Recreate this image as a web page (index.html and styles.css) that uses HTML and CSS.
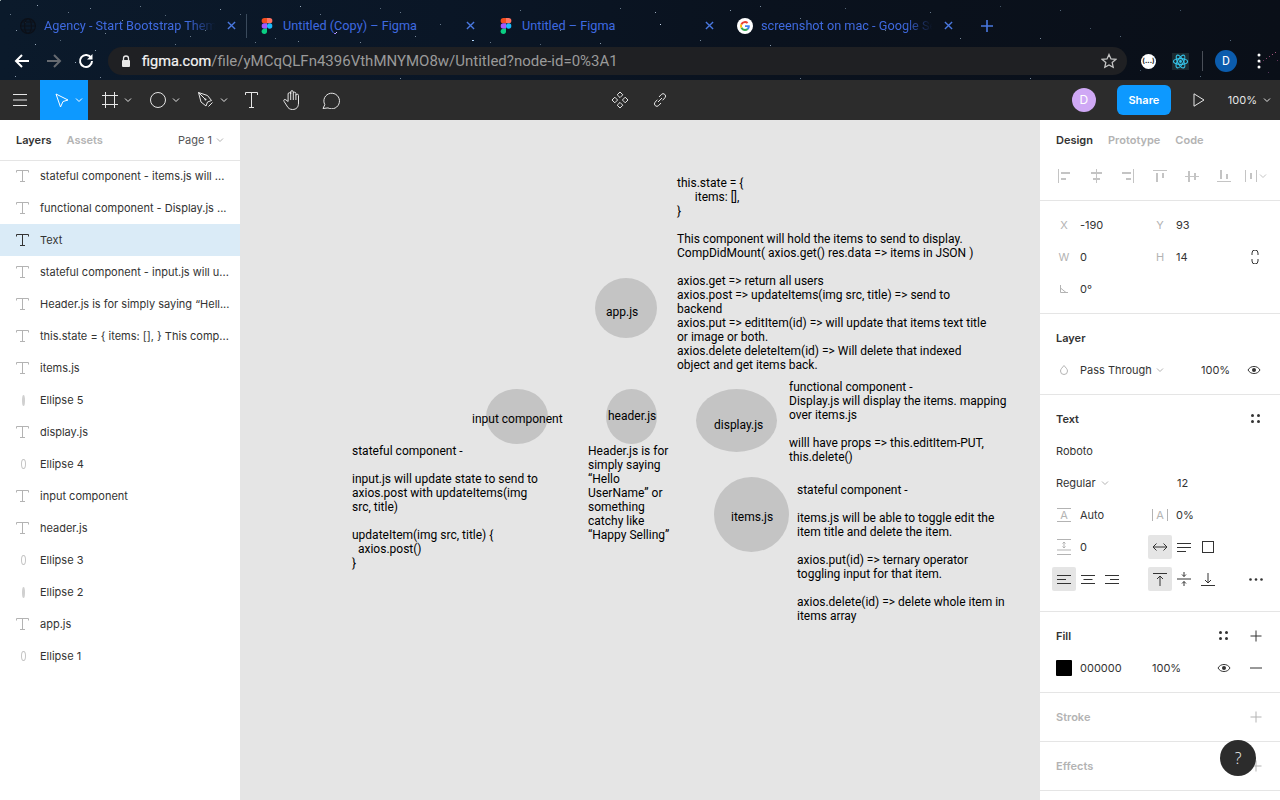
FILE: index.html
```html
<!DOCTYPE html>
<html lang="en">
<head>
    <meta charset="UTF-8">
    <meta name="viewport" content="width=device-width, initial-scale=1.0">
    <title>Untitled - Figma</title>
    <link rel="stylesheet" href="styles.css">
</head>
<body>
    <svg class="defs" width="0" height="0">
        <symbol id="i-chev" viewBox="0 0 8 8"><path d="M1 2.500l3 3 3-3" fill="none" stroke="currentColor"/></symbol>
        <symbol id="i-close" viewBox="0 0 10 10"><path d="M1 1l8 8M9 1l-8 8" fill="none" stroke="currentColor" stroke-width="1.500"/></symbol>
        <symbol id="i-figma" viewBox="0 0 10 15">
            <path d="M2.500 0H5v5H2.500a2.500 2.500 0 0 1 0-5z" fill="#f24e1e"/>
            <path d="M5 0h2.500a2.500 2.500 0 0 1 0 5H5z" fill="#ff7262"/>
            <path d="M2.500 5H5v5H2.500a2.500 2.500 0 0 1 0-5z" fill="#a259ff"/>
            <circle cx="7.500" cy="7.500" r="2.500" fill="#1abcfe"/>
            <path d="M2.500 10H5v2.500a2.500 2.500 0 1 1-2.500-2.500z" fill="#0acf83"/>
        </symbol>
        <symbol id="i-t" viewBox="0 0 13 12"><path d="M.5 2.500V.5h12v2M6.500 .5v11M4 11.500h5" fill="none" stroke="currentColor"/></symbol>
        <symbol id="i-eye" viewBox="0 0 14 10"><path d="M1 5c1.500-2.500 3.500-3.500 6-3.500s4.500 1 6 3.500c-1.500 2.500-3.500 3.500-6 3.500S2.500 7.500 1 5z" fill="none" stroke="currentColor"/><circle cx="7" cy="5" r="2" fill="currentColor"/></symbol>
        <symbol id="i-plus" viewBox="0 0 12 12"><path d="M6 .5v11M.5 6h11" fill="none" stroke="currentColor"/></symbol>
        <symbol id="i-dots" viewBox="0 0 9 9"><g fill="currentColor"><circle cx="1.500" cy="1.500" r="1.500"/><circle cx="7.500" cy="1.500" r="1.500"/><circle cx="1.500" cy="7.500" r="1.500"/><circle cx="7.500" cy="7.500" r="1.500"/></g></symbol>
    </svg>

    <header class="browser">
        <div class="stars"></div>
        <div class="tabs">
            <div class="tab tab-sep">
                <svg class="tab-icon" viewBox="0 0 14 14"><g fill="none" stroke="#0c1018"><circle cx="7" cy="7" r="6.500"/><ellipse cx="7" cy="7" rx="3" ry="6.500"/><path d="M.5 7h13M1.500 3.500h11M1.500 10.500h11"/></g></svg>
                <span class="tab-title">Agency - Start Bootstrap Them</span>
                <svg class="tab-close"><use href="#i-close"/></svg>
            </div>
            <div class="tab">
                <svg class="tab-icon"><use href="#i-figma"/></svg>
                <span class="tab-title tab-title-full">Untitled (Copy) – Figma</span>
                <svg class="tab-close"><use href="#i-close"/></svg>
            </div>
            <div class="tab">
                <svg class="tab-icon"><use href="#i-figma"/></svg>
                <span class="tab-title tab-title-full">Untitled – Figma</span>
                <svg class="tab-close"><use href="#i-close"/></svg>
            </div>
            <div class="tab">
                <svg class="tab-icon" viewBox="0 0 16 16">
                    <circle cx="8" cy="8" r="8" fill="#fff"/>
                    <path d="M12.800 8.200c0-.4 0-.7-.1-1H8v1.900h2.700a2.300 2.300 0 0 1-1 1.500l1.600 1.200c.9-.9 1.500-2.100 1.500-3.600z" fill="#4285f4"/>
                    <path d="M8 13c1.300 0 2.400-.4 3.300-1.200l-1.600-1.200c-.4.300-1 .5-1.700.5-1.300 0-2.400-.9-2.800-2l-1.600 1.200C4.400 11.900 6.100 13 8 13z" fill="#34a853"/>
                    <path d="M5.200 9.100a3 3 0 0 1 0-2.200L3.600 5.700a5 5 0 0 0 0 4.600z" fill="#fbbc05"/>
                    <path d="M8 5c.7 0 1.400.3 1.900.7l1.400-1.400A5 5 0 0 0 3.600 5.700l1.600 1.200C5.600 5.800 6.700 5 8 5z" fill="#ea4335"/>
                </svg>
                <span class="tab-title">screenshot on mac - Google Se</span>
                <svg class="tab-close"><use href="#i-close"/></svg>
            </div>
            <svg class="tab-new" viewBox="0 0 12 12"><path d="M6 0v12M0 6h12" fill="none" stroke="currentColor" stroke-width="1.600"/></svg>
        </div>
        <div class="addressbar">
            <svg class="nav nav-back" viewBox="0 0 16 16"><path d="M15 8H2M8 2L2 8l6 6" fill="none" stroke="currentColor" stroke-width="2"/></svg>
            <svg class="nav nav-fwd" viewBox="0 0 16 16"><path d="M1 8h13M8 2l6 6-6 6" fill="none" stroke="currentColor" stroke-width="2"/></svg>
            <svg class="nav nav-reload" viewBox="0 0 16 16"><path d="M13.200 5A6 6 0 1 0 14 8" fill="none" stroke="currentColor" stroke-width="2"/><path d="M14.500 1v5.500H9z" fill="currentColor"/></svg>
            <div class="url">
                <svg class="lock" viewBox="0 0 10 12"><path d="M2.500 5V3.500a2.500 2.500 0 0 1 5 0V5" fill="none" stroke="#e8e8e8" stroke-width="1.300"/><rect x="1" y="5" width="8" height="7" rx="1" fill="#e8e8e8"/></svg>
                <span class="url-host">figma.com</span><span class="url-path">/file/yMCqQLFn4396VthMNYMO8w/Untitled?node-id=0%3A1</span>
                <svg class="star-btn" viewBox="0 0 16 16"><path d="M8 1.500l2 4.400 4.800.5-3.600 3.200 1 4.700L8 11.900l-4.200 2.400 1-4.700L1.200 6.400 6 5.900z" fill="none" stroke="#c4c4c4" stroke-width="1.300"/></svg>
            </div>
            <div class="ext-white">(...)</div>
            <svg class="ext-react" viewBox="0 0 18 18"><rect width="18" height="18" fill="#1b2a30"/><g fill="none" stroke="#35c3e8" stroke-width="1.200"><ellipse cx="9" cy="9" rx="7.500" ry="3"/><ellipse cx="9" cy="9" rx="7.500" ry="3" transform="rotate(60 9 9)"/><ellipse cx="9" cy="9" rx="7.500" ry="3" transform="rotate(120 9 9)"/></g><circle cx="9" cy="9" r="1.500" fill="#35c3e8"/></svg>
            <span class="ext-sep"></span>
            <div class="profile">D</div>
            <svg class="kebab" viewBox="0 0 4 16"><g fill="#fff"><circle cx="2" cy="2" r="1.500"/><circle cx="2" cy="8" r="1.500"/><circle cx="2" cy="14" r="1.500"/></g></svg>
        </div>
    </header>

    <div class="toolbar">
        <div class="tools">
            <div class="tool tool-menu">
                <svg width="14" height="12" viewBox="0 0 14 12"><path d="M0 .5h14M0 6h14M0 11.500h14" stroke="currentColor"/></svg>
            </div>
            <div class="tool tool-split active">
                <svg width="14" height="15" viewBox="0 0 14 15"><path d="M1 1l12 6-5 1.500L5.500 14z" fill="none" stroke="currentColor"/></svg>
                <svg class="chev"><use href="#i-chev"/></svg>
            </div>
            <div class="tool tool-split">
                <svg width="16" height="16" viewBox="0 0 16 16"><path d="M3.500 0v16M12.500 0v16M0 3.500h16M0 12.500h16" fill="none" stroke="currentColor"/></svg>
                <svg class="chev"><use href="#i-chev"/></svg>
            </div>
            <div class="tool tool-split">
                <svg width="16" height="16" viewBox="0 0 16 16"><circle cx="8" cy="8" r="7.500" fill="none" stroke="currentColor"/></svg>
                <svg class="chev"><use href="#i-chev"/></svg>
            </div>
            <div class="tool tool-split">
                <svg width="16" height="16" viewBox="0 0 16 16"><path d="M.5.500l9 3 4 5-4 1.500-1.500 4-5-4zM.5.500L7 7" fill="none" stroke="currentColor"/><circle cx="7.500" cy="7.500" r="1" fill="currentColor"/><path d="M10.500 14.500l4-4" stroke="currentColor" fill="none"/></svg>
                <svg class="chev"><use href="#i-chev"/></svg>
            </div>
            <div class="tool tool-text">
                <svg width="13" height="16" viewBox="0 0 13 16"><path d="M.5 3V.5h12V3M6.500 .5v15M4 15.500h5" fill="none" stroke="currentColor"/></svg>
            </div>
            <div class="tool">
                <svg width="18" height="20" viewBox="0 0 18 20"><path d="M5.100 11.500L2.800 9.800C1.600 8.800.2 10 1 11.300L4 16c1.200 2.300 3 3.500 5.500 3.500 4 0 6-2.500 6-6.500V5.500a1.300 1.300 0 0 0-2.600 0V3.500a1.300 1.300 0 0 0-2.600 0V2a1.300 1.300 0 0 0-2.600 0V4a1.300 1.300 0 0 0-2.600 0zM7.700 2v8M10.300 3.500V10M12.900 5.500V10" fill="none" stroke="currentColor"/></svg>
            </div>
            <div class="tool tool-comment">
                <svg width="18" height="17" viewBox="0 0 18 17"><path d="M1 16.500l1.800-3.800A7.800 7.800 0 1 1 6 15.900z" fill="none" stroke="currentColor"/></svg>
            </div>
        </div>
        <div class="tools-center">
            <div class="tool">
                <svg width="18" height="18" viewBox="0 0 18 18"><g fill="none" stroke="currentColor"><path d="M9 1l2.800 2.800L9 6.600 6.200 3.800z"/><path d="M9 11.400l2.800 2.800L9 17l-2.800-2.800z"/><path d="M3.800 6.200L6.600 9l-2.800 2.800L1 9z"/><path d="M14.200 6.200L17 9l-2.800 2.800L11.400 9z"/></g></svg>
            </div>
            <div class="tool">
                <svg width="14" height="14" viewBox="0 0 14 14"><path d="M6 4l2.300-2.500a2.400 2.400 0 0 1 3.600 3.300L9.600 7.300M8 10l-2.300 2.500a2.400 2.400 0 0 1-3.600-3.300L4.400 6.700M5 9l4-4" fill="none" stroke="currentColor"/></svg>
            </div>
        </div>
        <div class="tools-right">
            <div class="avatar">D</div>
            <button class="share">Share</button>
            <svg class="play" width="12" height="14" viewBox="0 0 12 14"><path d="M1 .8L11 7 1 13.200z" fill="none" stroke="currentColor"/></svg>
            <span class="zoom-level">100%</span>
            <svg class="chev"><use href="#i-chev"/></svg>
        </div>
    </div>

    <main class="workspace">
        <aside class="layers">
            <div class="layers-head">
                <span class="tab-on">Layers</span>
                <span class="tab-off">Assets</span>
                <span class="page-pick">Page 1 <svg class="chev"><use href="#i-chev"/></svg></span>
            </div>
            <div class="layer"><svg class="layer-icon"><use href="#i-t"/></svg><span class="layer-name">stateful component - items.js will ...</span></div>
            <div class="layer"><svg class="layer-icon"><use href="#i-t"/></svg><span class="layer-name">functional component - Display.js ...</span></div>
            <div class="layer selected"><svg class="layer-icon"><use href="#i-t"/></svg><span class="layer-name">Text</span></div>
            <div class="layer"><svg class="layer-icon"><use href="#i-t"/></svg><span class="layer-name">stateful component - input.js will u...</span></div>
            <div class="layer"><svg class="layer-icon"><use href="#i-t"/></svg><span class="layer-name">Header.js is for simply saying “Hell...</span></div>
            <div class="layer"><svg class="layer-icon"><use href="#i-t"/></svg><span class="layer-name">this.state = { items: [], } This comp...</span></div>
            <div class="layer"><svg class="layer-icon"><use href="#i-t"/></svg><span class="layer-name">items.js</span></div>
            <div class="layer"><span class="oval oval-thin"></span><span class="layer-name">Ellipse 5</span></div>
            <div class="layer"><svg class="layer-icon"><use href="#i-t"/></svg><span class="layer-name">display.js</span></div>
            <div class="layer"><span class="oval"></span><span class="layer-name">Ellipse 4</span></div>
            <div class="layer"><svg class="layer-icon"><use href="#i-t"/></svg><span class="layer-name">input component</span></div>
            <div class="layer"><svg class="layer-icon"><use href="#i-t"/></svg><span class="layer-name">header.js</span></div>
            <div class="layer"><span class="oval"></span><span class="layer-name">Ellipse 3</span></div>
            <div class="layer"><span class="oval oval-thin"></span><span class="layer-name">Ellipse 2</span></div>
            <div class="layer"><svg class="layer-icon"><use href="#i-t"/></svg><span class="layer-name">app.js</span></div>
            <div class="layer"><span class="oval"></span><span class="layer-name">Ellipse 1</span></div>
        </aside>

        <section class="canvas">
            <div class="ellipse el-app"></div>
            <div class="ellipse el-input"></div>
            <div class="ellipse el-header"></div>
            <div class="ellipse el-display"></div>
            <div class="ellipse el-items"></div>
            <div class="note lb-app">app.js</div>
            <div class="note lb-input">input component</div>
            <div class="note lb-header">header.js</div>
            <div class="note lb-display">display.js</div>
            <div class="note lb-items">items.js</div>
            <div class="note nt-state">this.state = {
      items: [],
}

This component will hold the items to send to display.
CompDidMount( axios.get() res.data =&gt; items in JSON )

axios.get =&gt; return all users
axios.post =&gt; updateItems(img src, title) =&gt; send to
backend
axios.put =&gt; editItem(id) =&gt; will update that items text title
or image or both.
axios.delete deleteItem(id) =&gt; Will delete that indexed
object and get items back.</div>
            <div class="note nt-input">stateful component -

input.js will update state to send to
axios.post with updateItems(img
src, title)

updateItem(img src, title) {
  axios.post()
}</div>
            <div class="note nt-header">Header.js is for
simply saying
“Hello
UserName” or
something
catchy like
“Happy Selling”</div>
            <div class="note nt-display">functional component -
Display.js will display the items. mapping
over items.js

willl have props =&gt; this.editItem-PUT,
this.delete()</div>
            <div class="note nt-items">stateful component -

items.js will be able to toggle edit the
item title and delete the item.

axios.put(id) =&gt; ternary operator
toggling input for that item.

axios.delete(id) =&gt; delete whole item in
items array</div>
        </section>

        <aside class="props">
            <div class="props-tabs">
                <span class="tab-on">Design</span>
                <span class="tab-off">Prototype</span>
                <span class="tab-off">Code</span>
            </div>
            <div class="align-row">
                <span class="cell"><svg width="14" height="14" viewBox="0 0 14 14"><path d="M1.500 0v14" stroke="currentColor"/><path d="M4 4h9M4 10h5" fill="none" stroke="currentColor" stroke-width="2"/></svg></span>
                <span class="cell"><svg width="14" height="14" viewBox="0 0 14 14"><path d="M7.500 0v14" stroke="currentColor"/><path d="M2 4h11M4 10h7" fill="none" stroke="currentColor" stroke-width="2"/></svg></span>
                <span class="cell"><svg width="14" height="14" viewBox="0 0 14 14"><path d="M12.500 0v14" stroke="currentColor"/><path d="M1 4h9M5 10h5" fill="none" stroke="currentColor" stroke-width="2"/></svg></span>
                <span class="cell"><svg width="14" height="14" viewBox="0 0 14 14"><path d="M0 1.500h14" stroke="currentColor"/><path d="M4 4v9M10 4v5" fill="none" stroke="currentColor" stroke-width="2"/></svg></span>
                <span class="cell"><svg width="14" height="14" viewBox="0 0 14 14"><path d="M0 7.500h14" stroke="currentColor"/><path d="M4 2v11M10 4v7" fill="none" stroke="currentColor" stroke-width="2"/></svg></span>
                <span class="cell"><svg width="14" height="14" viewBox="0 0 14 14"><path d="M0 12.500h14" stroke="currentColor"/><path d="M4 1v9M10 5v5" fill="none" stroke="currentColor" stroke-width="2"/></svg></span>
                <span class="cell cell-dist"><svg width="12" height="12" viewBox="0 0 12 12"><path d="M.5 0v12M11.500 0v12" fill="none" stroke="currentColor"/><path d="M6 3v6" stroke="currentColor" stroke-width="2"/></svg><svg class="chev"><use href="#i-chev"/></svg></span>
            </div>

            <div class="panel">
                <div class="field-row">
                    <span class="field"><span class="field-key">X</span>-190</span>
                    <span class="field"><span class="field-key">Y</span>93</span>
                </div>
                <div class="field-row">
                    <span class="field"><span class="field-key">W</span>0</span>
                    <span class="field"><span class="field-key">H</span>14</span>
                    <svg class="link-wh" width="8" height="14" viewBox="0 0 8 14"><path d="M1 5V3a3 3 0 0 1 6 0v2M1 9v2a3 3 0 0 0 6 0V9" fill="none" stroke="#333"/></svg>
                </div>
                <div class="field-row">
                    <span class="field"><span class="field-key"><svg width="8" height="8" viewBox="0 0 8 8"><path d="M.5 0v7.500H8M.5 3L6 7.500" fill="none" stroke="#b3b3b3"/></svg></span>0°</span>
                </div>
            </div>

            <div class="panel">
                <div class="panel-title">Layer</div>
                <div class="field-row blend-row">
                    <span class="field-key"><svg width="8" height="10" viewBox="0 0 8 10"><path d="M4 .5C5.500 2.500 7.500 4 7.500 6a3.500 3.500 0 0 1-7 0C.5 4 2.500 2.500 4 .5z" fill="none" stroke="#b3b3b3"/></svg></span>
                    <span class="blend-name">Pass Through <svg class="chev"><use href="#i-chev"/></svg></span>
                    <span class="blend-pct">100%</span>
                    <svg class="eye"><use href="#i-eye"/></svg>
                </div>
            </div>

            <div class="panel panel-text">
                <div class="panel-title">Text<svg class="title-dots"><use href="#i-dots"/></svg></div>
                <div class="font-row">Roboto</div>
                <div class="font-row font-style"><span class="font-weight">Regular <svg class="chev"><use href="#i-chev"/></svg></span><span>12</span></div>
                <div class="field-row">
                    <span class="field"><span class="field-key"><svg width="14" height="14" viewBox="0 0 14 14"><path d="M0 .5h14M0 13.500h14" stroke="#b3b3b3"/><text x="7" y="11" text-anchor="middle" class="glyph">A</text></svg></span>Auto</span>
                    <span class="field"><span class="field-key"><svg width="16" height="12" viewBox="0 0 16 12"><path d="M.5 0v12M15.500 0v12" stroke="#b3b3b3"/><text x="8" y="10" text-anchor="middle" class="glyph">A</text></svg></span>0%</span>
                </div>
                <div class="field-row">
                    <span class="field"><span class="field-key"><svg width="14" height="16" viewBox="0 0 14 16"><path d="M0 .5h14M0 11h14M0 15.500h14" stroke="#b3b3b3"/><path d="M7 3v6M5.500 4.500L7 3l1.500 1.500M5.500 7.500L7 9l1.500-1.500" fill="none" stroke="#b3b3b3"/></svg></span>0</span>
                    <span class="btn-group">
                        <span class="ico-btn on"><svg width="14" height="8" viewBox="0 0 14 8"><path d="M0 4h14M3.500.5L0 4l3.500 3.500M10.500.5L14 4l-3.500 3.500" fill="none" stroke="#333"/></svg></span>
                        <span class="ico-btn"><svg width="14" height="9" viewBox="0 0 14 9"><path d="M0 .5h14M0 4.500h14M0 8.500h9" stroke="#333"/></svg></span>
                        <span class="ico-btn"><svg width="12" height="12" viewBox="0 0 12 12"><rect x=".5" y=".5" width="11" height="11" fill="none" stroke="#333"/></svg></span>
                    </span>
                </div>
                <div class="field-row align-text">
                    <span class="btn-group btn-group-left">
                        <span class="ico-btn on"><svg width="14" height="9" viewBox="0 0 14 9"><path d="M0 .5h14M0 4.500h9M0 8.500h14" stroke="#333"/></svg></span>
                        <span class="ico-btn"><svg width="14" height="9" viewBox="0 0 14 9"><path d="M0 .5h14M2.500 4.500h9M0 8.500h14" stroke="#333"/></svg></span>
                        <span class="ico-btn"><svg width="14" height="9" viewBox="0 0 14 9"><path d="M0 .5h14M5 4.500h9M0 8.500h14" stroke="#333"/></svg></span>
                    </span>
                    <span class="btn-group btn-group-v">
                        <span class="ico-btn on"><svg width="14" height="13" viewBox="0 0 14 13"><path d="M0 .5h14M7 3v10M4 6l3-3 3 3" fill="none" stroke="#333"/></svg></span>
                        <span class="ico-btn"><svg width="14" height="14" viewBox="0 0 14 14"><path d="M0 7h14M7 0v4.500M7 9.500V14M5 2.500l2 2 2-2M5 11.500l2-2 2 2" fill="none" stroke="#333"/></svg></span>
                        <span class="ico-btn"><svg width="14" height="13" viewBox="0 0 14 13"><path d="M0 12.500h14M7 0v10M4 7l3 3 3-3" fill="none" stroke="#333"/></svg></span>
                    </span>
                    <svg class="more" width="14" height="3" viewBox="0 0 14 3"><g fill="#333"><circle cx="1.500" cy="1.500" r="1.300"/><circle cx="7" cy="1.500" r="1.300"/><circle cx="12.500" cy="1.500" r="1.300"/></g></svg>
                </div>
            </div>

            <div class="panel">
                <div class="panel-title">Fill<svg class="fill-dots"><use href="#i-dots"/></svg><svg class="title-plus"><use href="#i-plus"/></svg></div>
                <div class="field-row fill-row">
                    <span class="swatch"></span>
                    <span class="fill-hex">000000</span>
                    <span class="fill-pct">100%</span>
                    <svg class="eye"><use href="#i-eye"/></svg>
                    <svg class="minus" viewBox="0 0 12 2"><path d="M0 1h12" stroke="#333"/></svg>
                </div>
            </div>

            <div class="panel">
                <div class="panel-title muted">Stroke<svg class="title-plus"><use href="#i-plus"/></svg></div>
            </div>
            <div class="panel">
                <div class="panel-title muted">Effects<svg class="title-plus"><use href="#i-plus"/></svg></div>
            </div>
        </aside>
    </main>

    <div class="help">?</div>
</body>
</html>
```

FILE: styles.css
```css
* {
    box-sizing: border-box;
}
body {
    margin: 0;
    width: 1280px;
    height: 800px;
    overflow: hidden;
    font-family: Inter, "Liberation Sans", sans-serif;
    font-size: 11px;
    color: #333;
    background: #fff;
}
.defs {
    position: absolute;
}
.chev {
    width: 8px;
    height: 8px;
    flex: none;
}

/* browser chrome */
.browser {
    position: relative;
    height: 80px;
    overflow: hidden;
    background: linear-gradient(90deg, #0b1a2b 0%, #0a1626 35%, #0a121e 60%, #0a0f18 100%);
}
.stars {
    position: absolute;
    left: 0;
    top: 0;
    width: 1px;
    height: 1px;
    background: #9aa;
    box-shadow:
        37px 5px #9ab, 90px 8px #789, 122px 20px #89a, 35px 44px #9ab, 60px 40px #567, 148px 47px #89a,
        300px 6px #9ab, 335px 33px #b9f, 336px 32px #d0c0ff, 334px 33px #86f, 472px 40px #cde, 473px 40px #9cf,
        400px 12px #678, 415px 36px #789, 298px 41px #789, 255px 42px #678, 220px 9px #89a, 190px 36px #678,
        520px 10px #678, 560px 30px #789, 600px 43px #89a, 655px 12px #9ab, 660px 24px #cde, 700px 40px #789,
        730px 10px #89a, 760px 6px #789, 770px 45px #89a, 800px 18px #678, 845px 8px #567, 885px 30px #678,
        930px 12px #678, 960px 38px #789, 1000px 6px #456, 1040px 38px #789, 1060px 10px #567, 1090px 28px #456,
        1120px 36px #567, 1180px 10px #456, 1230px 40px #567, 10px 14px #678, 16px 30px #89a, 75px 62px #9ab,
        95px 50px #89a, 175px 44px #678, 15px 76px #89a, 100px 77px #789, 400px 78px #789, 800px 78px #678,
        1140px 70px #456, 1200px 76px #567, 1030px 78px #789, 25px 22px #567, 68px 12px #678, 105px 33px #789,
        140px 6px #678, 165px 15px #567, 205px 30px #678, 240px 14px #567, 275px 38px #678, 320px 14px #678,
        360px 42px #789, 380px 8px #567, 440px 24px #678, 490px 42px #678, 540px 44px #567, 620px 8px #678,
        1275px 52px #a5567a, 1272px 54px #a5567a, 1269px 56px #84456a, 1266px 58px #84456a, 1263px 60px #63345a,
        1260px 62px #63345a, 1277px 60px #63345a, 1268px 72px #53345a;
}
.tabs {
    position: relative;
    display: flex;
    align-items: center;
    height: 46px;
    padding: 5px 0 0 8px;
}
.tab {
    display: flex;
    align-items: center;
    width: 239px;
    height: 24px;
    padding-left: 12px;
    color: #3f6ae0;
    font-family: Roboto, sans-serif;
    font-size: 12.7px;
    border-right: 1px solid transparent;
}
.tab-sep {
    border-right-color: #3a4a5c;
}
.tab-icon {
    width: 16px;
    height: 16px;
    flex: none;
}
.tab-title {
    flex: 1;
    margin-left: 8px;
    white-space: nowrap;
    -webkit-mask-image: linear-gradient(90deg, #000 82%, transparent 98%);
    mask-image: linear-gradient(90deg, #000 82%, transparent 98%);
}
.tab-title-full {
    -webkit-mask-image: none;
    mask-image: none;
}
.tab-close {
    width: 9px;
    height: 9px;
    margin: 0 10px 0 8px;
    flex: none;
    color: #4a78e0;
}
.tab-new {
    width: 12px;
    height: 12px;
    margin-left: 17px;
    color: #4a78e0;
}
.addressbar {
    position: relative;
    display: flex;
    align-items: center;
    height: 28px;
    margin-top: 1px;
    color: #fff;
}
.nav {
    width: 16px;
    height: 16px;
    flex: none;
    margin-left: 14px;
}
.nav-fwd {
    color: #666a70;
    margin-left: 16px;
}
.nav-reload {
    margin-left: 16px;
}
.url {
    display: flex;
    align-items: center;
    width: 1019px;
    height: 28px;
    margin-left: 14px;
    padding-left: 13px;
    background: #1f2023;
    border-radius: 14px;
    font-family: Roboto, sans-serif;
    font-size: 15px;
}
.lock {
    width: 10px;
    height: 12px;
    margin-right: 11px;
    flex: none;
}
.url-host {
    color: #f4f4f4;
    font-size: 14.5px;
    -webkit-text-stroke: 0.2px #f4f4f4;
}
.url-path {
    color: #9a9a9a;
}
.star-btn {
    width: 16px;
    height: 16px;
    margin-left: auto;
    margin-right: 10px;
}
.ext-white {
    width: 15px;
    height: 15px;
    margin-left: 14px;
    border-radius: 50%;
    background: #fff;
    color: #222;
    font-size: 7px;
    font-weight: 700;
    line-height: 14px;
    text-align: center;
    flex: none;
}
.ext-react {
    width: 17px;
    height: 17px;
    margin-left: 16px;
    flex: none;
}
.ext-sep {
    width: 1px;
    height: 20px;
    margin-left: 13px;
    background: #4a4f58;
}
.profile {
    width: 22px;
    height: 22px;
    margin-left: 12px;
    border-radius: 50%;
    background: #0b5cad;
    color: #fff;
    font-family: Roboto, sans-serif;
    font-size: 12px;
    line-height: 22px;
    text-align: center;
    flex: none;
}
.kebab {
    width: 4px;
    height: 16px;
    margin-left: 20px;
    flex: none;
}

/* figma toolbar */
.toolbar {
    display: flex;
    align-items: center;
    height: 40px;
    background: #2c2c2c;
    color: #e6e6e6;
}
.tools {
    display: flex;
    flex: 1;
    height: 40px;
    padding-right: 9px;
}
.tool {
    display: flex;
    align-items: center;
    justify-content: center;
    width: 40px;
    height: 40px;
    flex: none;
}
.tool-split {
    width: 48px;
    justify-content: flex-start;
    padding-left: 14px;
    gap: 6px;
}
.tool.active {
    background: #0d99ff;
    color: #fff;
    padding-left: 15px;
}
.tool-text {
    padding-right: 1px;
}
.tool-comment {
    padding-right: 2px;
}
.tools-center {
    display: flex;
    height: 40px;
}
.tools-right {
    display: flex;
    flex: 1;
    justify-content: flex-end;
    align-items: center;
    padding-right: 9px;
}
.avatar {
    width: 24px;
    height: 24px;
    border-radius: 50%;
    background: #cfa8f5;
    color: #fff;
    font-size: 12px;
    line-height: 24px;
    text-align: center;
}
.share {
    width: 54px;
    height: 30px;
    margin-left: 21px;
    padding: 0;
    border: none;
    border-radius: 6px;
    background: #0d99ff;
    color: #fff;
    font-family: Inter, sans-serif;
    font-size: 11px;
    font-weight: 600;
}
.play {
    margin-left: 22px;
}
.zoom-level {
    margin-left: 23px;
    font-size: 11px;
}
.tools-right .chev {
    margin-left: 6px;
}

/* main area */
.workspace {
    display: flex;
    height: 680px;
}
.layers {
    width: 240px;
    flex: none;
    background: #fff;
}
.layers-head {
    display: flex;
    align-items: center;
    height: 41px;
    padding: 0 16px;
    border-bottom: 1px solid #e5e5e5;
}
.tab-on {
    font-weight: 600;
    color: #333;
}
.tab-off {
    font-weight: 600;
    color: #b3b3b3;
}
.layers-head .tab-off {
    margin-left: 15px;
}
.page-pick {
    display: flex;
    align-items: center;
    gap: 4px;
    margin-left: auto;
    color: #555;
}
.page-pick .chev, .blend-name .chev, .font-weight .chev {
    color: #b3b3b3;
}
.layer {
    display: flex;
    align-items: center;
    height: 32px;
    padding-left: 16px;
    color: #333;
}
.layers-head + .layer {
    height: 31px;
    padding-bottom: 1px;
}
.layer.selected {
    background: #daebf7;
}
.layer-icon {
    width: 13px;
    height: 12px;
    color: #b3b3b3;
    flex: none;
    margin-right: 11px;
}
.selected .layer-icon {
    color: #333;
}
.layer-name {
    white-space: nowrap;
}
.oval {
    width: 5px;
    height: 10px;
    margin: 0 14px 0 5px;
    border: 1px solid #c4c4c4;
    border-radius: 50%;
    flex: none;
}
.oval-thin {
    width: 3px;
    height: 11px;
    margin: 0 15px 0 6px;
    border: none;
    background: #d0d0d0;
}

/* canvas: items sit at their design coordinates */
.canvas {
    position: relative;
    flex: 1;
    background: #e5e5e5;
}
.ellipse {
    position: absolute;
    background: #c4c4c4;
    border-radius: 50%;
}
.el-app {
    left: 355px;
    top: 158px;
    width: 62px;
    height: 60px;
}
.el-input {
    left: 246px;
    top: 269px;
    width: 62px;
    height: 55px;
}
.el-header {
    left: 366px;
    top: 269px;
    width: 51px;
    height: 55px;
}
.el-display {
    left: 456px;
    top: 269px;
    width: 81px;
    height: 63px;
}
.el-items {
    left: 474px;
    top: 357px;
    width: 75px;
    height: 75px;
}
.note {
    position: absolute;
    font-family: Roboto, sans-serif;
    font-size: 12px;
    line-height: 14px;
    color: #000;
    white-space: pre;
}
.lb-app {
    left: 366px;
    top: 185px;
}
.lb-input {
    left: 232px;
    top: 292px;
}
.lb-header {
    left: 368px;
    top: 289px;
}
.lb-display {
    left: 474px;
    top: 298px;
}
.lb-items {
    left: 491px;
    top: 390px;
}
.nt-state {
    left: 437px;
    top: 56px;
}
.nt-input {
    left: 112px;
    top: 324px;
}
.nt-header {
    left: 348px;
    top: 324px;
}
.nt-display {
    left: 549px;
    top: 260px;
}
.nt-items {
    left: 557px;
    top: 363px;
}

/* design panel */
.props {
    width: 240px;
    flex: none;
    background: #fff;
}
.props-tabs {
    display: flex;
    align-items: center;
    gap: 15px;
    height: 40px;
    padding-left: 16px;
}
.align-row {
    display: flex;
    height: 41px;
    padding: 0 0 8px 8px;
    border-bottom: 1px solid #e5e5e5;
    color: #c4c4c4;
}
.cell {
    display: flex;
    align-items: center;
    justify-content: center;
    width: 32px;
    height: 32px;
}
.cell-dist {
    gap: 2px;
}
.panel {
    padding: 8px 0;
    border-bottom: 1px solid #e5e5e5;
}
.panel-text {
    padding-bottom: 16px;
}
.panel-title {
    position: relative;
    display: flex;
    align-items: center;
    height: 32px;
    padding-left: 16px;
    font-weight: 600;
    color: #333;
}
.panel-title.muted {
    color: #b3b3b3;
}
.title-dots, .fill-dots {
    position: absolute;
    width: 9px;
    height: 9px;
    top: 11px;
    color: #333;
}
.title-dots {
    right: 20px;
}
.fill-dots {
    right: 52px;
}
.title-plus {
    position: absolute;
    right: 18px;
    top: 10px;
    width: 12px;
    height: 12px;
    color: #333;
}
.muted .title-plus {
    color: #b3b3b3;
}
.field-row {
    display: flex;
    align-items: center;
    height: 32px;
    padding-left: 16px;
}
.field {
    display: flex;
    align-items: center;
    width: 96px;
    gap: 8px;
}
.field-key {
    display: flex;
    justify-content: center;
    width: 16px;
    color: #b3b3b3;
}
.link-wh {
    margin-left: 3px;
}
.blend-name {
    display: flex;
    align-items: center;
    gap: 4px;
    width: 121px;
    margin-left: 8px;
}
.blend-pct {
    width: 46px;
}
.eye {
    width: 14px;
    height: 10px;
    color: #333;
}
.font-row {
    display: flex;
    align-items: center;
    height: 32px;
    padding-left: 16px;
}
.font-weight {
    display: flex;
    align-items: center;
    gap: 5px;
    width: 121px;
}
.glyph {
    font-size: 11px;
    fill: #b3b3b3;
}
.btn-group {
    display: flex;
    margin-left: -4px;
}
.btn-group-left {
    width: 96px;
}
.btn-group-v {
    margin-left: 0;
}
.ico-btn {
    display: flex;
    align-items: center;
    justify-content: center;
    width: 24px;
    height: 24px;
    border-radius: 2px;
}
.ico-btn.on {
    background: #e5e5e5;
}
.more {
    margin-left: 29px;
}
.fill-row .swatch {
    width: 16px;
    height: 16px;
    border-radius: 1px;
    background: #000;
}
.fill-hex {
    width: 72px;
    margin-left: 8px;
}
.fill-pct {
    width: 65px;
}
.minus {
    width: 12px;
    height: 2px;
    margin-left: 19px;
}

/* help button floats over the panel */
.help {
    position: absolute;
    left: 1220px;
    top: 740px;
    width: 36px;
    height: 36px;
    border-radius: 50%;
    background: #2c2c2c;
    color: #f4f4f4;
    font-family: "Open Sans", sans-serif;
    font-size: 16px;
    font-weight: 300;
    line-height: 36px;
    text-align: center;
}
```
